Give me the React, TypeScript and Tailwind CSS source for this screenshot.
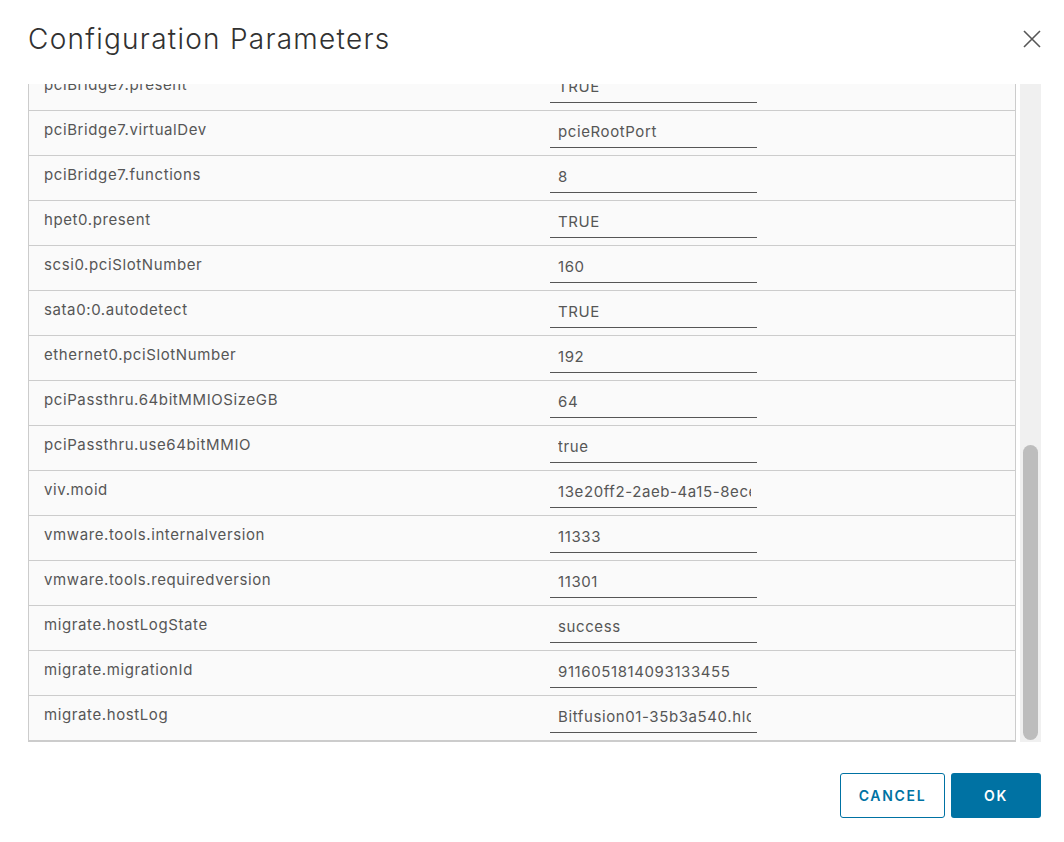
import React from "react";

const rows: [string, string][] = [
  ["pciBridge7.present", "TRUE"],
  ["pciBridge7.virtualDev", "pcieRootPort"],
  ["pciBridge7.functions", "8"],
  ["hpet0.present", "TRUE"],
  ["scsi0.pciSlotNumber", "160"],
  ["sata0:0.autodetect", "TRUE"],
  ["ethernet0.pciSlotNumber", "192"],
  ["pciPassthru.64bitMMIOSizeGB", "64"],
  ["pciPassthru.use64bitMMIO", "true"],
  ["viv.moid", "13e20ff2-2aeb-4a15-8ece-7c4a2b6f1d90"],
  ["vmware.tools.internalversion", "11333"],
  ["vmware.tools.requiredversion", "11301"],
  ["migrate.hostLogState", "success"],
  ["migrate.migrationId", "9116051814093133455"],
  ["migrate.hostLog", "Bitfusion01-35b3a540.hlog"],
];

export default function App() {
  return (
    <div
      className="w-[1064px] h-[842px] bg-white flex flex-col overflow-hidden"
      style={{ fontFamily: "Inter, 'Noto Sans', sans-serif" }}
    >
      <div className="h-[84px] shrink-0 flex items-start justify-between pl-[28px] pr-[23px]">
        <h1 className="mt-[20px] text-[28px] leading-[38px] font-light text-[#313131] tracking-[0.045em]">
          Configuration Parameters
        </h1>
        <button className="mt-[30px] w-[18px] h-[18px] flex items-center justify-center">
          <svg width="18" height="18" viewBox="0 0 18 18" fill="none">
            <path d="M1 1L17 17M17 1L1 17" stroke="#565656" strokeWidth="1.6" />
          </svg>
        </button>
      </div>

      <div className="flex ml-[28px] mr-[23px] h-[658px] shrink-0">
        <div className="w-[988px] h-full overflow-hidden border-l border-r border-[#cccccc]">
          <div className="mt-[-18px]">
            {rows.map(([k, v], i) => (
              <div
                key={k}
                className={
                  "flex bg-[#fafafa] " +
                  (i === rows.length - 1
                    ? "border-b-2 border-[#cccccc] h-[46px]"
                    : "border-b border-[#cccccc] h-[45px]")
                }
              >
                <div className="w-[521px] pl-[15px] pt-[8px] text-[15px] leading-[22px] text-[#565656] tracking-[0.04em]">
                  {k}
                </div>
                <div className="w-[207px] h-[37px] border-b border-[#565656] flex items-end pl-[8px] pr-[6px]">
                  <div className="w-full overflow-hidden pb-[4px] text-[15px] leading-[22px] text-[#565656] whitespace-nowrap tracking-[0.04em]">
                    {v}
                  </div>
                </div>
              </div>
            ))}
          </div>
        </div>
        <div className="ml-[4px] w-[21px] h-full bg-[#f0f0f0] relative">
          <div className="absolute left-[3px] top-[361px] w-[15px] h-[295px] rounded-full bg-[#bdbdbd]" />
        </div>
      </div>

      <div className="flex justify-end gap-[6px] pr-[23px] mt-[31px]">
        <button className="w-[105px] h-[45px] rounded-[3px] border border-[#0072a3] text-[#0072a3] text-[14px] font-semibold tracking-[0.12em] bg-white">
          CANCEL
        </button>
        <button className="w-[90px] h-[45px] rounded-[3px] bg-[#0072a3] text-white text-[14px] font-semibold tracking-[0.12em]">
          OK
        </button>
      </div>
    </div>
  );
}
